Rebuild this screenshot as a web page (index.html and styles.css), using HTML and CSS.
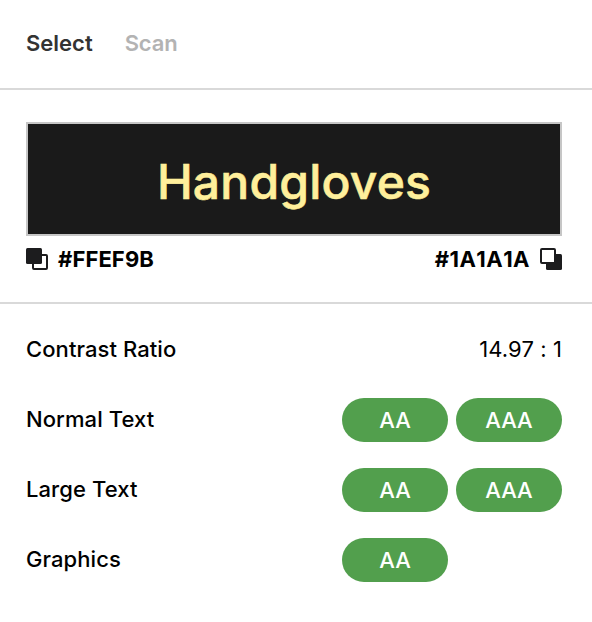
FILE: index.html
```html
<!DOCTYPE html>
<html lang="en">
<head>
<meta charset="utf-8">
<title>Contrast</title>
<link rel="stylesheet" href="styles.css">
</head>
<body>
<nav class="tabs"><span class="tab active">Select</span><span class="tab">Scan</span></nav>
<section class="preview">
  <div class="swatch">Handgloves</div>
  <div class="colors">
    <div class="color">
      <svg class="icon" viewBox="0 0 22 22"><rect x="7" y="7" width="14" height="14" rx="1" fill="#fff" stroke="#1c1c1e" stroke-width="2"/><rect width="16" height="16" rx="1.5" fill="#1c1c1e"/></svg>
      <span>#FFEF9B</span>
    </div>
    <div class="color background">
      <span>#1A1A1A</span>
      <svg class="icon" viewBox="0 0 22 22"><rect x="6" y="6" width="16" height="16" rx="1.5" fill="#1c1c1e"/><rect x="1" y="1" width="14" height="14" rx="1" fill="#fff" stroke="#1c1c1e" stroke-width="2"/></svg>
    </div>
  </div>
</section>
<section class="results">
  <div class="row"><span class="label">Contrast Ratio</span><span class="ratio">14.97 : 1</span></div>
  <div class="row"><span class="label">Normal Text</span><div class="badges"><span class="badge">AA</span><span class="badge">AAA</span></div></div>
  <div class="row"><span class="label">Large Text</span><div class="badges"><span class="badge">AA</span><span class="badge">AAA</span></div></div>
  <div class="row"><span class="label">Graphics</span><div class="badges"><span class="badge">AA</span></div></div>
</section>
</body>
</html>
```
FILE: styles.css
```css
* { box-sizing: border-box; }
body { margin: 0; background: #fff; color: #000; font: 500 22px/32px Inter, sans-serif; }
.tabs { display: flex; align-items: center; gap: 32px; height: 90px; padding: 0 26px 2px; border-bottom: 2px solid #d9d9d9; font-weight: 600; }
.tab { color: #b3b3b3; letter-spacing: -0.15px; }
.tab.active { color: #333; letter-spacing: 0; }
.preview { height: 214px; padding: 32px 30px 0 26px; border-bottom: 2px solid #d9d9d9; }
.swatch { display: flex; align-items: center; justify-content: center; height: 114px; width: 536px; padding-top: 5px; border: 2px solid #c6c6c6; background: #1a1a1a; color: #ffef9b; font-size: 48px; font-weight: 500; letter-spacing: 0.2px; -webkit-text-stroke: 0.6px #ffef9b; }
.colors { display: flex; justify-content: space-between; width: 536px; padding-top: 7px; font-weight: 700; letter-spacing: 0.1px; }
.color { display: flex; align-items: center; gap: 10px; }
.background { font-kerning: none; letter-spacing: 0.45px; }
.icon { width: 22px; height: 22px; }
.results { padding: 10px 30px 0 26px; }
.row { display: flex; align-items: center; justify-content: space-between; height: 70px; }
.label { letter-spacing: 0.08px; }
.ratio { font-weight: 400; letter-spacing: 0.1px; }
.badges { display: grid; grid-template-columns: 106px 106px; gap: 8px; padding-top: 2px; }
.badge { height: 44px; border-radius: 22px; background: #529f4d; color: #fff; text-align: center; line-height: 44px; }
```
